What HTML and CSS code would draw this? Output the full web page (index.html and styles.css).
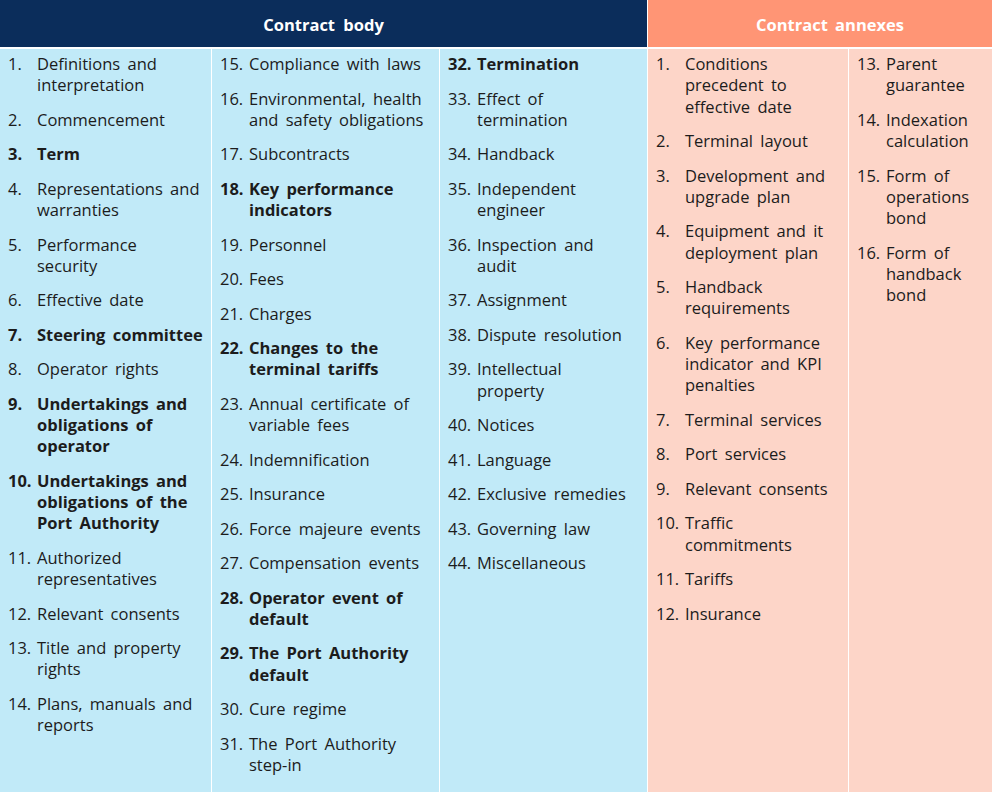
FILE: index.html
```html
<!DOCTYPE html>
<html lang="en">
<head>
<meta charset="utf-8">
<title>Contract structure</title>
<link rel="stylesheet" href="styles.css">
</head>
<body>
<div class="table">
  <div class="head head-body">Contract body</div>
  <div class="head head-annex">Contract annexes</div>

  <ol class="col blue">
    <li><span class="n">1.</span><span class="t">Definitions and<br>interpretation</span></li>
    <li><span class="n">2.</span><span class="t">Commencement</span></li>
    <li class="b"><span class="n">3.</span><span class="t">Term</span></li>
    <li><span class="n">4.</span><span class="t">Representations and<br>warranties</span></li>
    <li><span class="n">5.</span><span class="t">Performance<br>security</span></li>
    <li><span class="n">6.</span><span class="t">Effective date</span></li>
    <li class="b"><span class="n">7.</span><span class="t">Steering committee</span></li>
    <li><span class="n">8.</span><span class="t">Operator rights</span></li>
    <li class="b"><span class="n">9.</span><span class="t">Undertakings and<br>obligations of<br>operator</span></li>
    <li class="b"><span class="n">10.</span><span class="t">Undertakings and<br>obligations of the<br>Port Authority</span></li>
    <li><span class="n">11.</span><span class="t">Authorized<br>representatives</span></li>
    <li><span class="n">12.</span><span class="t">Relevant consents</span></li>
    <li><span class="n">13.</span><span class="t">Title and property<br>rights</span></li>
    <li><span class="n">14.</span><span class="t">Plans, manuals and<br>reports</span></li>
  </ol>

  <ol class="col blue">
    <li><span class="n">15.</span><span class="t">Compliance with laws</span></li>
    <li><span class="n">16.</span><span class="t">Environmental, health<br>and safety obligations</span></li>
    <li><span class="n">17.</span><span class="t">Subcontracts</span></li>
    <li class="b"><span class="n">18.</span><span class="t">Key performance<br>indicators</span></li>
    <li><span class="n">19.</span><span class="t">Personnel</span></li>
    <li><span class="n">20.</span><span class="t">Fees</span></li>
    <li><span class="n">21.</span><span class="t">Charges</span></li>
    <li class="b"><span class="n">22.</span><span class="t">Changes to the<br>terminal tariffs</span></li>
    <li><span class="n">23.</span><span class="t">Annual certificate of<br>variable fees</span></li>
    <li><span class="n">24.</span><span class="t">Indemnification</span></li>
    <li><span class="n">25.</span><span class="t">Insurance</span></li>
    <li><span class="n">26.</span><span class="t">Force majeure events</span></li>
    <li><span class="n">27.</span><span class="t">Compensation events</span></li>
    <li class="b"><span class="n">28.</span><span class="t">Operator event of<br>default</span></li>
    <li class="b"><span class="n">29.</span><span class="t">The Port Authority<br>default</span></li>
    <li><span class="n">30.</span><span class="t">Cure regime</span></li>
    <li><span class="n">31.</span><span class="t">The Port Authority<br>step-in</span></li>
  </ol>

  <ol class="col blue">
    <li class="b"><span class="n">32.</span><span class="t">Termination</span></li>
    <li><span class="n">33.</span><span class="t">Effect of<br>termination</span></li>
    <li><span class="n">34.</span><span class="t">Handback</span></li>
    <li><span class="n">35.</span><span class="t">Independent<br>engineer</span></li>
    <li><span class="n">36.</span><span class="t">Inspection and<br>audit</span></li>
    <li><span class="n">37.</span><span class="t">Assignment</span></li>
    <li><span class="n">38.</span><span class="t">Dispute resolution</span></li>
    <li><span class="n">39.</span><span class="t">Intellectual<br>property</span></li>
    <li><span class="n">40.</span><span class="t">Notices</span></li>
    <li><span class="n">41.</span><span class="t">Language</span></li>
    <li><span class="n">42.</span><span class="t">Exclusive remedies</span></li>
    <li><span class="n">43.</span><span class="t">Governing law</span></li>
    <li><span class="n">44.</span><span class="t">Miscellaneous</span></li>
  </ol>

  <ol class="col salmon">
    <li><span class="n">1.</span><span class="t">Conditions<br>precedent to<br>effective date</span></li>
    <li><span class="n">2.</span><span class="t">Terminal layout</span></li>
    <li><span class="n">3.</span><span class="t">Development and<br>upgrade plan</span></li>
    <li><span class="n">4.</span><span class="t">Equipment and it<br>deployment plan</span></li>
    <li><span class="n">5.</span><span class="t">Handback<br>requirements</span></li>
    <li><span class="n">6.</span><span class="t">Key performance<br>indicator and KPI<br>penalties</span></li>
    <li><span class="n">7.</span><span class="t">Terminal services</span></li>
    <li><span class="n">8.</span><span class="t">Port services</span></li>
    <li><span class="n">9.</span><span class="t">Relevant consents</span></li>
    <li><span class="n">10.</span><span class="t">Traffic<br>commitments</span></li>
    <li><span class="n">11.</span><span class="t">Tariffs</span></li>
    <li><span class="n">12.</span><span class="t">Insurance</span></li>
  </ol>

  <ol class="col salmon">
    <li><span class="n">13.</span><span class="t">Parent<br>guarantee</span></li>
    <li><span class="n">14.</span><span class="t">Indexation<br>calculation</span></li>
    <li><span class="n">15.</span><span class="t">Form of<br>operations<br>bond</span></li>
    <li><span class="n">16.</span><span class="t">Form of<br>handback<br>bond</span></li>
  </ol>
</div>
</body>
</html>
```
FILE: styles.css
```css
html, body {
  margin: 0;
  padding: 0;
  background: #ffffff;
}

body {
  width: 992px;
  height: 792px;
  overflow: hidden;
  font-family: "Open Sans", "Noto Sans", sans-serif;
  color: #1c1c1c;
}

.table {
  display: grid;
  grid-template-columns: 211px 227px 207px 200px 1fr;
  grid-template-rows: 47px 743px;
  column-gap: 1px;
  row-gap: 2px;
  background: #ffffff;
}

.head {
  display: flex;
  align-items: center;
  justify-content: center;
  color: #ffffff;
  font-weight: 700;
  font-size: 16.5px;
  word-spacing: 4px;
  padding-top: 1px;
}

.head-body {
  grid-column: 1 / 4;
  background: #0b2d5b;
}

.head-annex {
  grid-column: 4 / 6;
  background: #ff9575;
  padding-left: 20px;
  word-spacing: 3px;
}

.col {
  list-style: none;
  margin: 0;
  padding: 4px 4px 0 8px;
  display: flex;
  flex-direction: column;
  gap: 13.25px;
  font-size: 16.5px;
  line-height: 21.25px;
  word-spacing: 3px;
}

.blue {
  background: #c1eaf8;
}

.salmon {
  background: #fdd5c8;
}

.col li {
  display: flex;
  white-space: nowrap;
}

.col .n {
  flex: 0 0 29px;
  word-spacing: 0;
}

.col .b {
  font-weight: 700;
}
```
